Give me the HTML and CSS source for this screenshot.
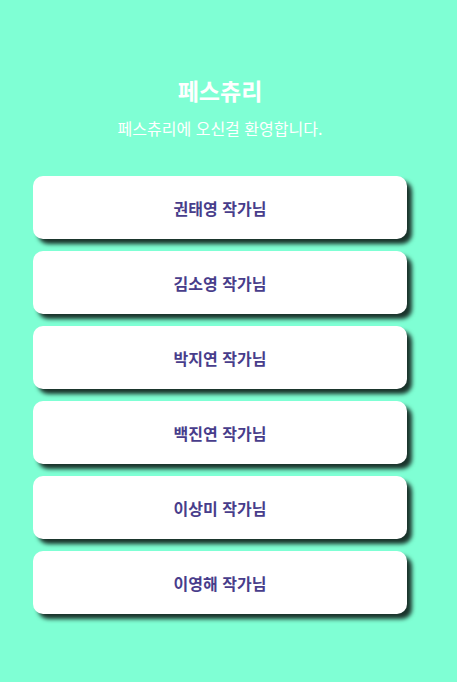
FILE: index.html
```html
<!DOCTYPE html>
<html lang="ko">
<head>
    <meta charset="UTF-8">
    <meta name="viewport" content="width=device-width, initial-scale=1.0">
    <title>페스츄리</title>
    <link rel="stylesheet" href="styles.css">
</head>
<body>
    <div class="wrap">
        <div class="header">
            <h1>페스츄리</h1>
            <p>페스츄리에 오신걸 환영합니다.</p>
        </div>
        <div class="author-list">
            <a class="author-btn" href="#">권태영 작가님</a>
            <a class="author-btn" href="#">김소영 작가님</a>
            <a class="author-btn" href="#">박지연 작가님</a>
            <a class="author-btn" href="#">백진연 작가님</a>
            <a class="author-btn" href="#">이상미 작가님</a>
            <a class="author-btn" href="#">이영해 작가님</a>
        </div>
    </div>
</body>
</html>
```

FILE: styles.css
```css
body {
    font-family: 'Noto Sans CJK KR', 'Noto Sans', sans-serif;
    background-color: #7fffd4;
    margin: 0;
}

.wrap {
    width: 440px;
    padding-top: 73px;
    padding-bottom: 60px;
}

.header {
    text-align: center;
    color: #ffffff;
}

.header h1 {
    font-size: 23px;
    font-weight: 700;
    margin: 0;
    line-height: 34px;
}

.header p {
    font-size: 16px;
    margin: 9px 0 0;
    line-height: 24px;
}

.author-list {
    display: flex;
    flex-direction: column;
    gap: 12px;
    padding: 36px 33px 0;
}

.author-btn {
    display: flex;
    justify-content: center;
    align-items: center;
    height: 63px;
    background-color: #ffffff;
    border-radius: 10px;
    box-shadow: 5px 5px 4px rgba(0, 0, 0, 0.8);
    color: #483d8b;
    font-size: 16px;
    font-weight: 700;
    text-decoration: none;
}
```
